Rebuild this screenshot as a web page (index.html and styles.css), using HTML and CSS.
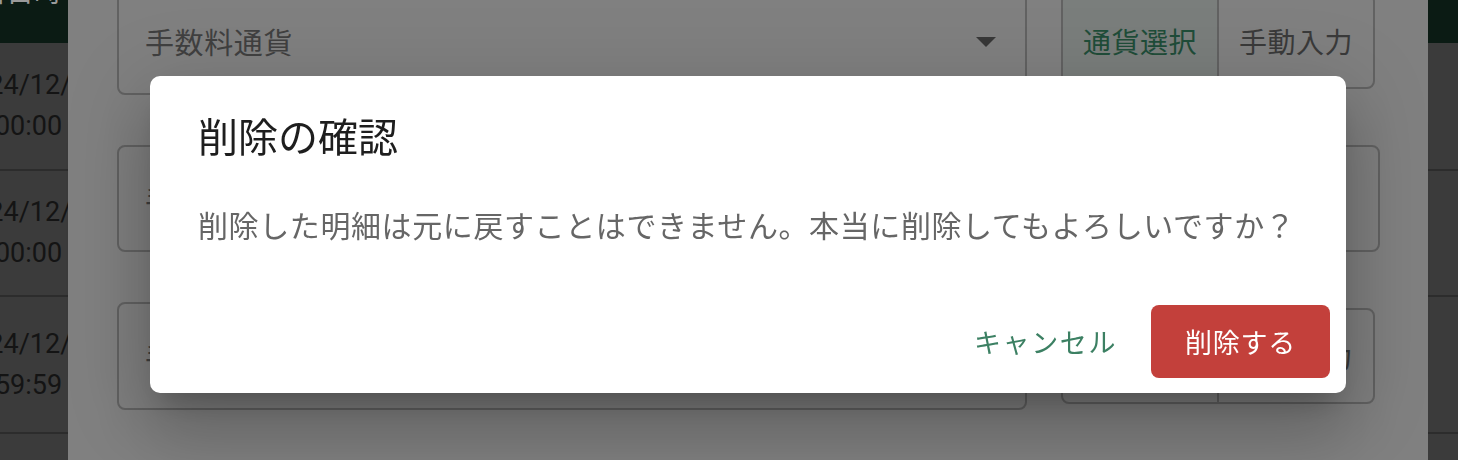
FILE: index.html
```html
<!DOCTYPE html>
<html lang="ja">
<head>
<meta charset="utf-8">
<title>削除の確認</title>
<link rel="stylesheet" href="styles.css">
</head>
<body>
<div class="page">
  <div class="thead"><span class="th">取引日時</span></div>
  <div class="tr tr1"><div class="td"><span>2024/12/01</span><span>00:00:00</span></div></div>
  <div class="tr tr2"><div class="td"><span>2024/12/15</span><span>00:00:00</span></div></div>
  <div class="tr tr3"><div class="td"><span>2024/12/31</span><span>23:59:59</span></div></div>
</div>

<div class="modal">
  <div class="form">
    <div class="field select">
      <span class="label">手数料通貨</span>
      <svg class="arrow" width="20" height="10" viewBox="0 0 20 10"><path d="M0 0h20L10 10z"/></svg>
    </div>
    <div class="toggle">
      <button class="tbtn on">通貨選択</button>
      <button class="tbtn">手動入力</button>
    </div>
    <div class="field wide"><span class="label">手数料額</span></div>
    <div class="field"><span class="label">手数料率</span></div>
    <div class="toggle">
      <button class="tbtn">通貨選択</button>
      <button class="tbtn">手動入力</button>
    </div>
  </div>
</div>

<div class="dialog" role="dialog">
  <h2 class="title">削除の確認</h2>
  <p class="text">削除した明細は元に戻すことはできません。本当に削除してもよろしいですか？</p>
  <div class="actions">
    <button class="btn cancel">キャンセル</button>
    <button class="btn danger">削除する</button>
  </div>
</div>
</body>
</html>
```
FILE: styles.css
```css
* { box-sizing: border-box; }
html, body {
  margin: 0;
  height: 100%;
  overflow: hidden;
}
body {
  background: #3b3b3b;
  font-family: "Noto Sans CJK JP", "Noto Sans", sans-serif;
}

/* background page (dimmed) */
.page {
  width: 100%;
}
.thead {
  margin-top: -25px;
  height: 68px;
  background: #0b1b14;
}
.th {
  display: block;
  margin-left: -50px;
  font-size: 28px;
  line-height: 30px;
  color: #9a9a9a;
  white-space: nowrap;
}
.tr {
  border-bottom: 2px solid #2c2c2c;
  display: flex;
  align-items: center;
}
.tr1 { height: 128px; }
.tr2 { height: 126px; }
.tr3 { height: 137px; }
.td {
  margin-left: -42px;
  display: flex;
  flex-direction: column;
  font-family: Roboto, "Liberation Sans", sans-serif;
  font-size: 27px;
  line-height: 41px;
  color: #141414;
}

/* first (dimmed) dialog */
.modal {
  position: fixed;
  left: 68px;
  top: -40px;
  bottom: -40px;
  width: 1360px;
  background: #808080;
  border-radius: 8px;
  padding: 27px 0 0 49px;
}
.form {
  display: grid;
  grid-template-columns: 910px 319px;
  column-gap: 34px;
  row-gap: 50px;
  align-items: center;
}
.field {
  height: 108px;
  border: 2px solid #626262;
  border-radius: 8px;
  display: flex;
  align-items: center;
  justify-content: space-between;
  padding: 0 29px 0 26px;
}
.wide {
  grid-column: 1 / -1;
  height: 107px;
}
.label {
  font-size: 29px;
  letter-spacing: 0.6px;
  color: #404040;
}
.arrow {
  fill: #383838;
  margin-top: 2px;
}
.toggle {
  width: 314px;
  height: 96px;
  display: flex;
  border: 2px solid #626262;
  border-radius: 8px;
  overflow: hidden;
}
.tbtn {
  flex: 1;
  border: 0;
  margin: 0;
  padding: 0;
  background: transparent;
  font-family: "Noto Sans CJK JP", sans-serif;
  font-size: 28px;
  letter-spacing: 0.5px;
  color: #3a3a3a;
}
.tbtn + .tbtn {
  border-left: 2px solid #626262;
}
.tbtn.on {
  background: rgba(40, 100, 70, 0.07);
  color: #1f4d39;
}

/* confirmation dialog */
.dialog {
  position: fixed;
  left: 150px;
  top: 76px;
  width: 1196px;
  background: #ffffff;
  border-radius: 10px;
  padding: 30px 16px 15px 48px;
  box-shadow:
    0 20px 26px -12px rgba(0, 0, 0, 0.2),
    0 42px 66px 5px rgba(0, 0, 0, 0.14),
    0 16px 80px 14px rgba(0, 0, 0, 0.12);
}
.title {
  margin: 0;
  font-size: 40px;
  line-height: 58px;
  font-weight: 400;
  color: #1e1e1e;
}
.text {
  margin: 38px 0 0;
  font-size: 30px;
  line-height: 45px;
  letter-spacing: 0.6px;
  color: #666666;
}
.actions {
  margin-top: 58px;
  display: flex;
  justify-content: flex-end;
  gap: 14px;
}
.btn {
  height: 73px;
  border: 0;
  border-radius: 8px;
  font-family: "Noto Sans CJK JP", sans-serif;
  font-size: 27px;
  letter-spacing: 0.8px;
  background: transparent;
}
.cancel {
  padding: 0 20px 0 22px;
  letter-spacing: 1.6px;
  color: #3c8063;
}
.danger {
  width: 179px;
  padding: 0;
  background: #c3403b;
  color: #ffffff;
}
```
